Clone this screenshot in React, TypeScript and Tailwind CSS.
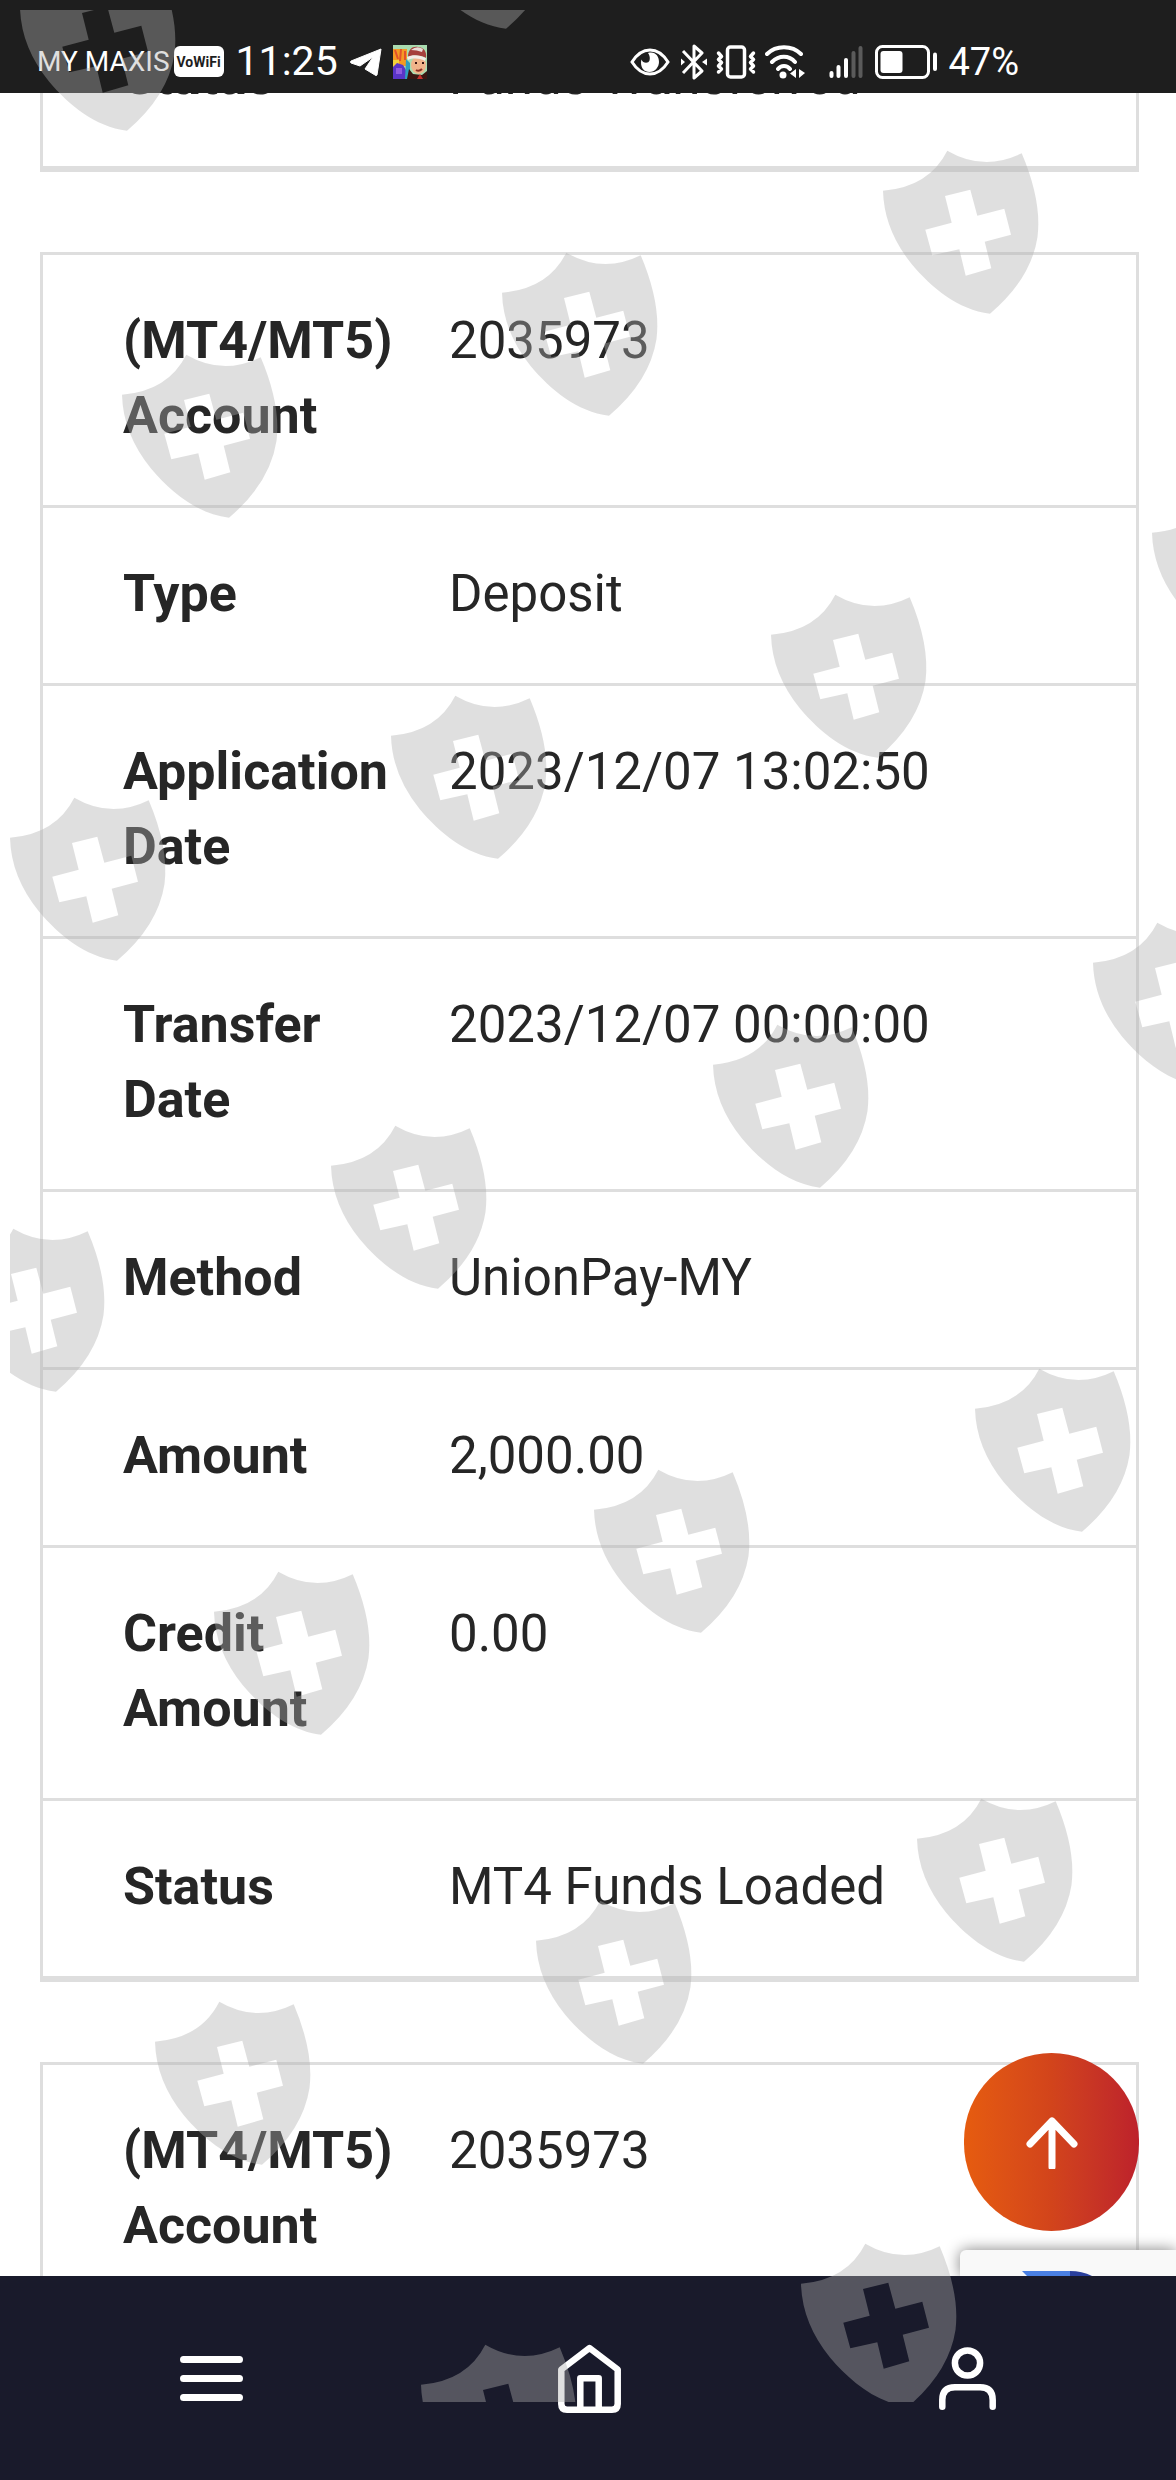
import type { ReactNode } from "react";

type Field = { label: string; value: string };

const PREVIOUS: Field[] = [{ label: "Status", value: "Funds Transferred" }];

const CURRENT: Field[] = [
  { label: "(MT4/MT5) Account", value: "2035973" },
  { label: "Type", value: "Deposit" },
  { label: "Application Date", value: "2023/12/07 13:02:50" },
  { label: "Transfer Date", value: "2023/12/07 00:00:00" },
  { label: "Method", value: "UnionPay-MY" },
  { label: "Amount", value: "2,000.00" },
  { label: "Credit Amount", value: "0.00" },
  { label: "Status", value: "MT4 Funds Loaded" },
];

const NEXT: Field[] = [{ label: "(MT4/MT5) Account", value: "2035973" }];

// top-left corner of every shield in the overlay
const SHIELDS = [
  [20, -33],
  [399, -135],
  [883, 150],
  [502, 252],
  [122, 354],
  [1152, 492],
  [771, 594],
  [391, 695],
  [10, 797],
  [1093, 922],
  [713, 1024],
  [331, 1125],
  [-51, 1228],
  [975, 1368],
  [594, 1469],
  [214, 1571],
  [917, 1798],
  [536, 1900],
  [155, 2001],
  [801, 2243],
  [421, 2344],
];

function Shield({ x, y }: { x: number; y: number }) {
  return (
    <path
      transform={`translate(${x - 10} ${y - 10})`}
      fillRule="evenodd"
      d="M64.3 .7Q101 22 138.7 3.3Q159 51 154.500 87Q148 129 107 163.700C75 160 48 137 29 114.500Q1 80 0 40.700Q46 37 64.300 .7ZM62 46L87.300 39.700L94.300 65.700L121.300 58.700L128 84.700L101.700 91.700L108.300 118.300L82.700 125.700L76.300 99.300L49.300 105.300L42.300 79.700L68.700 72.700Z"
    />
  );
}

function Watermark() {
  return (
    <div className="pointer-events-none absolute top-[10px] right-0 bottom-[78px] left-[10px] overflow-hidden">
      <svg className="h-full w-full fill-[#afafaf]/40" aria-hidden="true">
        {SHIELDS.map(([x, y]) => (
          <Shield key={`${x},${y}`} x={x} y={y} />
        ))}
      </svg>
    </div>
  );
}

function EyeIcon() {
  return (
    <svg width="40" height="28" viewBox="0 0 40 28" fill="none">
      <path d="M2 14C7 6 13 2 20 2s13 4 18 12c-5 8-11 12-18 12S7 22 2 14Z" stroke="#fff" strokeWidth="3" />
      <path d="M18 5c7-2 11 3 11 9 0 5-4 10-9.500 10S11 20 11 14.500c0-1 .2-2 .6-3 1 4 7 4.500 8 .8.800-3-.6-6-1.600-7.300Z" fill="#fff" />
    </svg>
  );
}

function BluetoothIcon() {
  return (
    <svg width="26" height="36" viewBox="0 0 26 36" fill="none" stroke="#fff" strokeWidth="3" strokeLinejoin="round">
      <path d="M2 7l19 20-8 7V2l8 7L2 29" />
      <path d="M0 14.500l4 3.500-4 3.500ZM26 14.500L21 18l5 3.500Z" fill="#fff" stroke="none" />
    </svg>
  );
}

function VibrateIcon() {
  return (
    <svg width="40" height="34" viewBox="0 0 40 34" fill="none" stroke="#fff" strokeWidth="3.500" strokeLinecap="round" strokeLinejoin="round">
      <rect x="11.500" y="2" width="17" height="30" rx="3" />
      <path d="M2.500 8l3 3.500-3 3 3 3-3 3.500 3 3-3 3M37.500 8l-3 3.500 3 3-3 3 3 3.500-3 3 3 3" />
    </svg>
  );
}

function WifiIcon() {
  return (
    <svg width="40" height="34" viewBox="0 0 40 34" fill="none" stroke="#fff" strokeWidth="4" strokeLinecap="round">
      <path d="M2 9C11 0 27 0 36 9M7 17c7-7 17-7 23 0M13 24c3-4 9-4 12 0" />
      <circle cx="18" cy="30" r="3.500" fill="#fff" stroke="none" />
      <path d="M31 24v9l-6-4.500ZM34 24v9l6-5Z" fill="#fff" stroke="none" />
    </svg>
  );
}

function SignalIcon() {
  return (
    <svg width="34" height="34" viewBox="0 0 34 34" strokeWidth="4" strokeLinecap="round">
      <path d="M2.500 28v3M9.500 22v9M17 15v16" stroke="#fff" />
      <path d="M24.500 8v23M31.500 3v28" stroke="#5b5b5b" />
    </svg>
  );
}

function BatteryIcon() {
  return (
    <svg width="62" height="34" viewBox="0 0 62 34" fill="none">
      <rect x="1.500" y="1.500" width="52" height="31" rx="6" stroke="#fff" strokeWidth="3" />
      <rect x="5.500" y="6" width="22" height="22" rx="3" fill="#fff" />
      <path d="M60 9.500v14.500" stroke="#fff" strokeWidth="4" strokeLinecap="round" />
    </svg>
  );
}

function TelegramIcon() {
  return (
    <svg width="32" height="28" viewBox="0 0 32 28">
      <path d="M31 1L27 27q-1 1-2 0l-10-6 8-12L10 18 1 15q-1-1 0-2Z" fill="#fff" stroke="#fff" strokeLinejoin="round" />
    </svg>
  );
}

function GameIcon() {
  return (
    <svg width="34" height="34" viewBox="0 0 34 34">
      <rect width="34" height="34" fill="#a9dcb0" />
      <path d="M0 4h14v17H0Z" fill="#f59a23" />
      <path d="M2 5l3 9M8 4l-1 12M12 6v9" stroke="#e2512b" strokeWidth="2" />
      <path d="M0 15h6v8H0Z" fill="#f3d23a" />
      <path d="M0 22l4-4 6 2 3 5v9H0Z" fill="#5a35c8" />
      <path d="M3 23h6v6H3Z" fill="#8f5be0" />
      <path d="M13 14l4 4v16h-5Z" fill="#2f9fc0" />
      <path d="M16 24l4 5 9 1 5-4v8H14Z" fill="#3a1712" />
      <path d="M27 29l3 5h-6Z" fill="#c3302b" />
      <ellipse cx="25.500" cy="20" rx="7.500" ry="9" fill="#f0b48a" />
      <path d="M15 12C15 4 20 1 25 2c6 0 9 5 8 11-6-3-12-3-18-1Z" fill="#a5403c" />
      <path d="M18 5q6-5 12-1l-1 3q-5-2-11-2Z" fill="#e9dcd8" />
      <path d="M14 12c6-3 13-2 19 1l-1 3c-6-3-12-3-17-1Z" fill="#f3ece6" />
      <path d="M22 18h2M29 18h2" stroke="#3a1512" strokeWidth="2" />
      <path d="M23 25q3 2 6-1" stroke="#8c2f22" strokeWidth="2" fill="none" />
    </svg>
  );
}

function StatusBar() {
  return (
    <header className="flex h-[93px] shrink-0 items-center justify-between bg-[#1e1e1e] pt-[30px] pr-[157px] pl-[37px] text-white">
      <div className="flex items-center">
        <span className="text-[28px] leading-none">MY MAXIS</span>
        <span className="ml-1 flex h-[31px] w-[50px] items-center justify-center rounded-md bg-white text-[14px] leading-none font-bold text-[#1e1e1e]">
          VoWiFi
        </span>
        <time className="ml-3 text-[41px] leading-none">11:25</time>
        <span className="ml-3 flex items-center gap-[11px]">
          <TelegramIcon />
          <GameIcon />
        </span>
      </div>
      <div className="flex items-center">
        <EyeIcon />
        <span className="ml-[11px] flex items-center gap-[9px]">
          <BluetoothIcon />
          <VibrateIcon />
          <WifiIcon />
        </span>
        <span className="ml-6 flex gap-3">
          <SignalIcon />
          <BatteryIcon />
        </span>
        <span className="ml-[11px] text-[38px] leading-none">47%</span>
      </div>
    </header>
  );
}

function Card({ fields }: { fields: Field[] }) {
  return (
    <dl className="divide-y-[3px] divide-[#dedede] border-[3px] border-b-[6px] border-[#dedede]">
      {fields.map(({ label, value }) => (
        <div key={label} className="flex pt-[48px] pr-[40px] pb-[52px] pl-[80px] leading-[75px] text-[#262626]">
          <dt className="w-[326px] shrink-0 pr-[40px] text-[52px] font-bold">{label}</dt>
          <dd className="text-[51px]">{value}</dd>
        </div>
      ))}
    </dl>
  );
}

function BackToTop() {
  return (
    <button
      aria-label="Back to top"
      className="absolute right-[37px] bottom-[45px] flex h-[178px] w-[175px] items-center justify-center rounded-full bg-linear-to-r from-[#e65c0f] via-[#d2441b] to-[#bd212b]"
    >
      <svg width="54" height="54" viewBox="0 0 54 54" fill="none" stroke="#fff" strokeWidth="7" strokeLinecap="round" strokeLinejoin="round">
        <path d="M5 29L27 6l22 23M27 6v46" />
      </svg>
    </button>
  );
}

function CaptchaBadge() {
  return (
    <div className="absolute right-0 bottom-0 flex h-[26px] w-[216px] items-end rounded-tl-md bg-[#f9f9f9] pl-[62px] shadow-[0_0_15px_gray]">
      <svg width="74" height="5" viewBox="0 0 74 5">
        <path d="M0 0h48v5H5Z" fill="#4a80e4" />
        <path d="M48 0q12 0 22 5H48Z" fill="#2a3f9c" />
      </svg>
    </div>
  );
}

function NavButton({ label, children }: { label: string; children: ReactNode }) {
  return (
    <button aria-label={label} className="flex h-full items-center justify-center">
      {children}
    </button>
  );
}

function BottomNav() {
  return (
    <nav className="grid h-[204px] shrink-0 grid-cols-3 bg-[#191a2b] pr-[20px] pl-[22px]">
      <NavButton label="Menu">
        <svg width="63" height="45" viewBox="0 0 63 45" stroke="#fff" strokeWidth="7" strokeLinecap="round">
          <path d="M3.500 3.500h56M3.500 22.500h56M3.500 41.500h56" />
        </svg>
      </NavButton>
      <NavButton label="Home">
        <svg width="63" height="69" viewBox="0 0 63 69" fill="none" stroke="#fff" strokeWidth="6.500" strokeLinejoin="round">
          <path d="M31.500 4L59.700 25.500V60q0 5.700-5.700 5.700H9q-5.700 0-5.700-5.700V25.500ZM22.300 65V34.300h18.400V65" />
        </svg>
      </NavButton>
      <NavButton label="Account">
        <svg width="57" height="63" viewBox="0 0 57 63" fill="none" stroke="#fff" strokeWidth="6.500" strokeLinecap="round">
          <circle cx="28.500" cy="16" r="12.600" />
          <path d="M3.300 59.700V53q0-12.700 12.700-12.700h25q12.700 0 12.700 12.700v6.700" />
        </svg>
      </NavButton>
    </nav>
  );
}

export default function App() {
  return (
    <div className="relative flex h-screen flex-col overflow-hidden bg-white font-[Roboto,'Noto_Sans',sans-serif]">
      <StatusBar />
      <main className="relative min-h-0 flex-1 overflow-hidden">
        <div className="-mt-[105px] flex flex-col gap-[80px] pr-[37px] pl-[40px]">
          <Card fields={PREVIOUS} />
          <Card fields={CURRENT} />
          <Card fields={NEXT} />
        </div>
        <BackToTop />
        <CaptchaBadge />
      </main>
      <BottomNav />
      <Watermark />
    </div>
  );
}
